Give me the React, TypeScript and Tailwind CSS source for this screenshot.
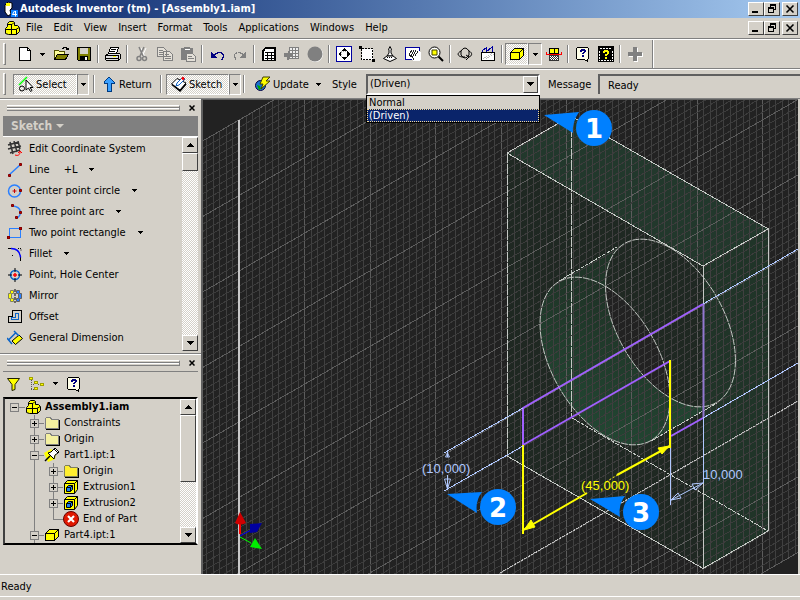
import { useState, type ReactNode } from "react";

const RAISED =
  "border border-t-white border-l-white border-b-[#404040] border-r-[#404040] bg-[#d4d0c8]";
const PRESSED = "border border-t-[#808080] border-l-[#808080] border-b-white border-r-white";
const CHECKER =
  "bg-[repeating-conic-gradient(#fff_0_25%,#d4d0c8_0_50%)] bg-[length:2px_2px]";

function Icon({ children, smooth }: { children: ReactNode; smooth?: boolean }) {
  return (
    <svg
      className="w-4 h-4 shrink-0"
      viewBox="0 0 16 16"
      fill="none"
      stroke="#000"
      shapeRendering={smooth ? "auto" : "crispEdges"}
      aria-hidden="true"
    >
      {children}
    </svg>
  );
}

function Arrow({ up }: { up?: boolean }) {
  return (
    <svg className="w-[7px] h-1 shrink-0" viewBox="0 0 7 4" shapeRendering="crispEdges" aria-hidden="true">
      <path d={up ? "M0 4h7L3.500 0z" : "M0 0h7L3.500 4z"} fill="#000" />
    </svg>
  );
}

function SmallArrow() {
  return (
    <svg className="w-[5px] h-[3px] shrink-0" viewBox="0 0 5 3" shapeRendering="crispEdges" aria-hidden="true">
      <path d="M0 0h5v1H4v1H3v1H2V2H1V1H0z" fill="#000" />
    </svg>
  );
}

const icons: Record<string, ReactNode> = {
  new: (
    <Icon>
      <path d="M2.500 1.500h8l3 3v10h-11z" fill="#fff" />
      <path d="M10.500 1.500v3h3" />
    </Icon>
  ),
  open: (
    <Icon>
      <path d="M1.500 13.500v-9h4l1 1h5v3" fill="#ffff9a" stroke="#505000" />
      <path d="M1.500 13.500l3-5h11l-3 5z" fill="#808000" />
      <path d="M9.500 2.500l2-1h2l1 2M12.500 3.500h3v-2" />
    </Icon>
  ),
  save: (
    <Icon>
      <path d="M1.500 1.500h13v13h-12l-1-1z" fill="#808000" />
      <path d="M4 2h8v6H4z" fill="#d4d0c8" stroke="none" />
      <path d="M4 10h8v4H4z" fill="#000" stroke="none" />
      <path d="M9 11h2v3H9z" fill="#fff" stroke="none" />
    </Icon>
  ),
  print: (
    <Icon>
      <path d="M5.500 1.500h8l-2 6h-8z" fill="#fff" />
      <path d="M6 3.500h5M5 5.500h5" />
      <path d="M.5 9.500l3-2h11l1 1v4l-2 2h-12l-1-1z" fill="#e0e0e0" />
      <path d="M1 9.500h12M1 12.500h12M13.500 9v5" />
      <path d="M8 10.500h3" stroke="#ff0" />
    </Icon>
  ),
  cut: (
    <Icon smooth>
      <path d="M6 1l4 9M11 1l-4 9" stroke="#fff" transform="translate(1 1)" />
      <path d="M5 1l4 9M10 1l-4 9" stroke="#808080" strokeWidth="1.500" />
      <circle cx="5" cy="12.500" r="2" stroke="#808080" strokeWidth="1.500" />
      <circle cx="10.500" cy="12.500" r="2" stroke="#808080" strokeWidth="1.500" />
    </Icon>
  ),
  copy: (
    <Icon>
      <path d="M.5 1.500h6l3 3v6h-9zM6.500 5.500h6l3 3v6h-9z" stroke="#808080" fill="#e4e0d8" />
      <path d="M2 4.500h4M2 6.500h4M2 8.500h4M8 8.500h4M8 10.500h6M8 12.500h6" stroke="#808080" />
    </Icon>
  ),
  paste: (
    <Icon>
      <path d="M1 2h12v12H1z" fill="#808080" stroke="none" />
      <path d="M4.500 3.500h5" stroke="#fff" />
      <path d="M4 1h6v2H4z" fill="#808080" stroke="none" />
      <path d="M6.500 7.500h6l3 3v5h-9z" fill="#e4e0d8" stroke="#808080" />
      <path d="M8 10.500h4M8 12.500h6" stroke="#808080" />
    </Icon>
  ),
  undo: (
    <Icon>
      <path d="M2 6v6h6v-1H7v-1H6V9H5V8H4V7H3V6z" fill="#000080" stroke="none" />
      <path d="M5 8.500h1v-1h2v-1h4v1h1v1h1v3h-1v2h-1" stroke="#000080" />
    </Icon>
  ),
  redo: (
    <Icon>
      <path d="M14 6v6H8v-1h1v-1h1V9h1V8h1V7h1V6z" fill="#808080" stroke="none" />
      <path d="M11 8.500h-1v-1H8v-1H4v1H3v1H2v3h1v2h1" stroke="#808080" strokeDasharray="3 1" />
    </Icon>
  ),
  table: (
    <Icon>
      <path d="M1.500 4.500l3-3h10v13h-13z" fill="#fff" />
      <path d="M2.500 14V5l2-2.500h9V14" />
      <path d="M4 6.500h10M4 9.500h10M4 12.500h10M6.500 6v8M10.500 6v8" />
    </Icon>
  ),
  sheet: (
    <Icon>
      <path d="M5.500 1.500h9v11h-9z" fill="#eee" stroke="#808080" />
      <path d="M5 4.500h10M5 7.500h10M5 10.500h10M8.500 1v12M11.500 1v12" stroke="#808080" />
      <path d="M0 7h4V5l4 4-3 5H3v-3H0z" fill="#808080" stroke="none" />
    </Icon>
  ),
  disc: (
    <Icon smooth>
      <circle cx="8.500" cy="8.500" r="7.500" fill="#fff" stroke="none" />
      <circle cx="8" cy="8" r="7.500" fill="#808080" stroke="none" />
    </Icon>
  ),
  zoomAll: (
    <Icon>
      <path d="M.5.5h15v15H.5z" fill="#fff" stroke="#0000a0" />
      <path d="M5 5h6v6H5z" stroke="#aaa" strokeDasharray="1 1" />
      <path d="M8 2l3 3H5zM8 14l3-3H5zM2 8l3-3v6zM14 8l-3-3v6z" fill="#000" stroke="none" />
    </Icon>
  ),
  zoomWindow: (
    <Icon>
      <path d="M2.500 2.500h11v11h-11z" fill="#fff" strokeDasharray="2 1" />
      <path d="M0 0h3v3H0zM13 13h3v3h-3z" fill="#000" stroke="none" />
    </Icon>
  ),
  zoom: (
    <Icon smooth>
      <path d="M8 .5l1.500 3H9V7l2 3H5l2-3V3.500h-.5z" fill="#fff" />
      <path d="M5 10l-3.500 2.500L8 15.500l6.500-3L11 10z" fill="#fff" />
      <path d="M5 11.500h6" strokeDasharray="1 1" />
    </Icon>
  ),
  pan: (
    <Icon>
      <path d="M.5 1.500h14v12H.5z" fill="#fff" stroke="#0000a0" />
      <path d="M7 8l2-4h5l2 3v6l-2 2H8l-3-4z" fill="#fff" stroke="none" />
      <path
        d="M4 8.500l2-3 1-1M6 9.500l3-5M8 9.500l3-5M10 9.500l3-4M4 9.500l3 1 2 3"
        stroke="#222"
      />
    </Icon>
  ),
  zoomSelect: (
    <Icon smooth>
      <circle cx="6.500" cy="6.500" r="5.500" fill="#fff" />
      <path d="M10.500 10.500l4.500 4.500" strokeWidth="2" />
      <path d="M4 4h5v5H4z" fill="#ff0" stroke="#404000" />
    </Icon>
  ),
  rotate: (
    <Icon smooth>
      <path d="M4 9V5q4-6 8 0v4q-4 6-8 0" />
      <path d="M4 5C0 7 0 10 5 11h3M12 5c4 2 3 5 0 6M9 9l3 2-3 3" />
    </Icon>
  ),
  lookAt: (
    <Icon>
      <path d="M1.500 6.500h13v8h-13z" fill="#fff" />
      <path d="M2.500 6V4.500l4-3V6M6 6l6-5v5" stroke="#0000a0" />
      <path d="M3 13l9-6M6 13l8-5" stroke="#bbb" strokeDasharray="1 1" />
    </Icon>
  ),
  box: (
    <Icon>
      <path d="M1.500 6.500l4-4h9v7l-4 4h-9z" fill="#ff0" />
      <path d="M1.500 6.500h9v7M10.500 6.500l4-4" />
    </Icon>
  ),
  section: (
    <Icon>
      <path d="M3.500 2.500h9v5h-9z" fill="#ff0" />
      <path d="M8.500 2v6" />
      <path d="M3 9h10v6H3z" fill="#333" stroke="none" />
      <path d="M0 8.500h16M.5 6v3M15.500 6v3" stroke="#f00" />
      <path d="M4 10.500h8M5 11.500h8M4 12.500h8M5 13.500h8" stroke="#fff" strokeDasharray="1 1" />
    </Icon>
  ),
  help: (
    <Icon>
      <path d="M1.500 2.500l1-1h10l1 1v10l-1 1v2l-3-2h-7l-1-1z" fill="#ffffe8" />
      <path d="M5 6V4h1V3h4v1h1v2h-1v1H9v1H7V7h1V6h1V5H7v1zM7 9h2v2H7z" fill="#000080" stroke="none" />
    </Icon>
  ),
  helpGrid: (
    <Icon>
      <path d="M0 0h16v16H0z" fill="#000" stroke="none" />
      <path d="M2 2.500h12M1.500 5v10M14.500 5v10M3 14.500h10" stroke="#fff" strokeDasharray="2 1" />
      <path d="M5 7V5h1V4h4v1h1v3h-1v1H9v1H7V8h2V6H7v1zM7 11h2v2H7z" fill="#ff0" stroke="none" />
    </Icon>
  ),
  plus: (
    <Icon>
      <path d="M7 2h4v5h5v4h-5v5H7v-5H2V7h5z" fill="#fff" stroke="none" />
      <path d="M6 1h4v5h5v4h-5v5H6v-5H1V6h5z" fill="#808080" stroke="none" />
    </Icon>
  ),
  cursor: (
    <Icon smooth>
      <path d="M1 9L9 1" stroke="#0f0" strokeWidth="1.500" />
      <circle cx="4" cy="12.500" r="2.500" />
      <path d="M8 4v10l2.500-2 2 3.500 1.500-1-2-3h3z" fill="#fff" />
    </Icon>
  ),
  up: (
    <Icon>
      <path d="M8 1l5 5v1h-3v8H6V7H3V6z" fill="#3aa0ff" stroke="#003a80" />
    </Icon>
  ),
  sketch: (
    <Icon smooth>
      <path d="M.5 8L6 2.500 15 7l-6 7z" fill="#fff" />
      <path d="M1 8.500l8 6.500 6-7" strokeWidth="1.500" />
      <path d="M5 10l1-3 6-6 2 2-6 6z" fill="#fff" stroke="#1060c0" />
      <path d="M11 1.500l2 2" stroke="#f00" strokeWidth="2.500" />
    </Icon>
  ),
  update: (
    <Icon smooth>
      <circle cx="5.500" cy="9.500" r="5" fill="#1a70d0" stroke="#004" />
      <path d="M2 9l3 1 1 3-2 1z" fill="#0a0" stroke="none" />
      <path d="M8 1h7l-4 4h4l-9 8 2-5H5z" fill="#ff0" stroke="#404000" />
    </Icon>
  ),
  coord: (
    <Icon smooth>
      <path d="M1 4l11-3M1 8l13-3M3 12l10-3M3 1l3 12M7 0l3 11M11 0l2 8" stroke="#333" strokeWidth="1.500" />
      <path d="M8 14c3 1 5 0 5-3M11 12l2-2 2 2" stroke="#f00" />
    </Icon>
  ),
  line: (
    <Icon smooth>
      <path d="M2 13L13 3" stroke="#2a7fff" strokeWidth="1.500" />
      <path d="M1.500 12.500h2v2h-2zM12.500 1.500h2v2h-2z" fill="#c00000" stroke="#800000" />
    </Icon>
  ),
  circle: (
    <Icon smooth>
      <circle cx="7.500" cy="8" r="6" stroke="#2a7fff" strokeWidth="1.500" />
      <path d="M5.500 8h4M7.500 6v4" stroke="#c00" />
      <path d="M12.500 6.500h2v2h-2z" fill="#c00000" stroke="#800000" />
    </Icon>
  ),
  arc: (
    <Icon smooth>
      <path d="M6 2c9 1 9 9 4 12" stroke="#2a7fff" strokeWidth="1.500" />
      <path d="M4.500.5h2v2h-2zM12.500 7.500h2v2h-2zM8.500 12.500h2v2h-2z" fill="#c00000" stroke="#800000" />
    </Icon>
  ),
  rect: (
    <Icon>
      <path d="M2 3.500h11v9H2z" stroke="#2a7fff" />
      <path d="M.5 11.500h2v2h-2zM12.500 2.500h2v2h-2z" fill="#c00000" stroke="#800000" />
    </Icon>
  ),
  fillet: (
    <Icon smooth>
      <path d="M1 2.500h3M13.500 11v4" />
      <path d="M4 2.500c6 0 9 3 9.500 9" stroke="#00f" strokeWidth="1.500" />
      <path d="M11 2.500h3v3" strokeDasharray="1 1" />
      <path d="M5 9.500h1" />
    </Icon>
  ),
  point: (
    <Icon smooth>
      <circle cx="8" cy="8" r="4.500" stroke="#0a64c8" strokeWidth="1.500" />
      <path d="M8 1v4M8 11v4M1 8h4M11 8h4" />
      <path d="M6 8h4M8 6v4" stroke="#f00" strokeWidth="1.500" />
    </Icon>
  ),
  mirror: (
    <Icon smooth>
      <path d="M6.500 2.500h-3v3h-2v5h2v3h3v-3h-2v-5h2z" fill="#ff0" stroke="#808060" />
      <path d="M9.500 2.500h3v3h2v5h-2v3h-3v-3h2v-5h-2z" fill="#2a7fff" stroke="#606060" />
      <path d="M8 1v14" strokeDasharray="3 1" />
    </Icon>
  ),
  offset: (
    <Icon>
      <path d="M5.500 1.500h9v12h-13v-6h4z" />
      <path d="M8.500 4.500h3v6h-7v-2h4z" stroke="#0a64c8" />
    </Icon>
  ),
  dimension: (
    <Icon smooth>
      <path d="M5 11l7-6 3.500 3.500-7 6z" fill="#ff0" />
      <path d="M0 8l5 6M7 1l5 5M2 9.500L8.500 3" stroke="#0a64c8" strokeWidth="1.500" />
    </Icon>
  ),
  filter: (
    <Icon smooth>
      <path d="M1.500 2.500h12l-4.500 6v5l-3 1V8.500z" fill="#ff0" stroke="#202000" />
    </Icon>
  ),
  treeView: (
    <Icon>
      <path d="M2.500 4v10M2 8.500h4M2 13.500h4M9 8.500h3" stroke="#555" strokeDasharray="1 1" />
      <path d="M.5 1.500h3v2h-3zM5.500 5.500h3v2h-3zM11.500 7.500h3v2h-3zM5.500 11.500h3v2h-3z" fill="#ff0" stroke="#a0a000" />
    </Icon>
  ),
  assembly: (
    <Icon smooth>
      <path d="M3.500 6.500v-3l2-2h4l1 1v3h3l2 2v4l-3 3h-8l-3-1v-5z" fill="#ff0" />
      <path d="M2 9.500h10.500v5M7.500 5v9M12 9.500l3-2M4 4.500h4l2-2" />
    </Icon>
  ),
  folder: (
    <Icon>
      <path d="M1.500 13.500v-10l1-1h4l1 2h7v9z" fill="#f4f0a0" stroke="#808080" />
      <path d="M2 14.500h13.500V5" />
    </Icon>
  ),
  folderYellow: (
    <Icon>
      <path d="M1.500 13.500v-10l1-1h4l1 2h7v9z" fill="#ffee30" stroke="#808060" />
      <path d="M2 14.500h13.500V5" />
    </Icon>
  ),
  pin: (
    <Icon smooth>
      <path d="M0 6l7-4 5 4-1 6-7 3z" fill="#ff0" stroke="none" />
      <path d="M1 14l5-5" strokeWidth="1.500" />
      <path d="M4 6l3-1 3-3 1-1 4 4-1 1-3 2-1 4z" fill="#fff" />
      <path d="M10 2l4 4" />
    </Icon>
  ),
  extrusion: (
    <Icon smooth>
      <path d="M1.500 4.500l3-3h10v9l-3 4h-10z" fill="#ff0" />
      <path d="M1.500 4.500h10v10M11.500 4.500l3-3" />
      <path d="M3.500 8.500l2-2h4v4l-2 2h-4z" fill="#1a80f0" />
      <path d="M3.500 8.500h4v4M7.500 8.500l2-2" />
    </Icon>
  ),
  end: (
    <Icon smooth>
      <circle cx="8" cy="8" r="7.500" fill="#e01800" stroke="#600" />
      <path d="M5 5l6 6M11 5l-6 6" stroke="#fff" strokeWidth="2.200" />
    </Icon>
  ),
  app: (
    <Icon smooth>
      <path d="M3 4l3-3 4 1v5l-2 2 1 4-3 2-3-4z" fill="#fff" />
      <path d="M4 2h4v3H4z" fill="#ff0" stroke="none" />
      <path d="M9 9h7v7H9z" fill="#0a80ff" stroke="none" />
      <path d="M12.500 10l-2 3.500H15M13.500 10v5.500" stroke="#fff" />
    </Icon>
  ),
};

function WindowButtons() {
  return (
    <div className="flex">
      <button aria-label="Minimize" className={`w-4 h-[14px] flex items-center justify-center ${RAISED}`}>
        <svg className="w-2.5 h-2.5" viewBox="0 0 10 10" aria-hidden="true">
          <path d="M1 7h6v2H1z" />
        </svg>
      </button>
      <button aria-label="Restore" className={`w-4 h-[14px] flex items-center justify-center ${RAISED}`}>
        <svg className="w-2.5 h-2.5" viewBox="0 0 10 10" fill="none" stroke="#000" shapeRendering="crispEdges" aria-hidden="true">
          <path d="M3.500 3V.5h5v5H7M3 1.500h6M1.500 3.500h5v5h-5zM1 4.500h6" />
        </svg>
      </button>
      <button aria-label="Close" className={`ml-0.5 w-4 h-[14px] flex items-center justify-center ${RAISED}`}>
        <svg className="w-2.5 h-2.5" viewBox="0 0 10 10" stroke="#000" strokeWidth="1.600" aria-hidden="true">
          <path d="M1.500 1.500l7 7M8.500 1.500l-7 7" />
        </svg>
      </button>
    </div>
  );
}

function Separator() {
  return (
    <div className="w-1.5 h-[18px] flex justify-center shrink-0">
      <div className="w-0.5 border-l border-[#808080] border-r border-r-white" />
    </div>
  );
}

function Grip() {
  return <div className="w-[3px] h-[22px] shrink-0 border border-t-white border-l-white border-b-[#808080] border-r-[#808080]" />;
}

function ToolButton({ name }: { name: string }) {
  return (
    <button aria-label={name} className="w-[23px] h-[22px] shrink-0 flex items-center justify-center">
      {icons[name]}
    </button>
  );
}

function StandardToolbar() {
  return (
    <div className="h-[30px] flex items-center border-t border-t-white border-b border-b-[#808080] pl-[3px]">
      <Grip />
      <div className="w-[7px] shrink-0" />
      <ToolButton name="new" />
      <button aria-label="New options" className="w-[13px] h-[22px] flex items-center justify-center">
        <SmallArrow />
      </button>
      <ToolButton name="open" />
      <ToolButton name="save" />
      <Separator />
      <ToolButton name="print" />
      <Separator />
      <ToolButton name="cut" />
      <ToolButton name="copy" />
      <ToolButton name="paste" />
      <Separator />
      <ToolButton name="undo" />
      <ToolButton name="redo" />
      <Separator />
      <ToolButton name="table" />
      <ToolButton name="sheet" />
      <ToolButton name="disc" />
      <Separator />
      <ToolButton name="zoomAll" />
      <ToolButton name="zoomWindow" />
      <ToolButton name="zoom" />
      <ToolButton name="pan" />
      <ToolButton name="zoomSelect" />
      <Separator />
      <ToolButton name="rotate" />
      <ToolButton name="lookAt" />
      <Separator />
      <button aria-label="Shaded display" className={`w-[23px] h-[22px] flex items-center justify-center ${PRESSED} ${CHECKER}`}>
        {icons.box}
      </button>
      <button aria-label="Display options" className={`w-[14px] h-[22px] flex items-center justify-center ${PRESSED}`}>
        <SmallArrow />
      </button>
      <ToolButton name="section" />
      <Separator />
      <ToolButton name="help" />
      <ToolButton name="helpGrid" />
      <Separator />
      <ToolButton name="plus" />
      <div className="ml-1.5 self-stretch w-0.5 border-l border-[#808080] border-r border-r-white" />
    </div>
  );
}

function CommandBar() {
  const [style, setStyle] = useState("(Driven)");
  return (
    <div className="h-[29px] flex items-center border-t border-t-white pl-[3px]">
      <Grip />
      <div className={`ml-[7px] w-16 h-[21px] flex items-center shrink-0 ${PRESSED} ${CHECKER}`}>
        <button className="flex items-center gap-0.5 pl-1">
          {icons.cursor}
          <span className="pt-0.5">Select</span>
        </button>
      </div>
      <button aria-label="Select options" className={`w-3 h-[21px] flex items-center justify-center ${PRESSED}`}>
        <SmallArrow />
      </button>
      <div className="w-0.5" />
      <Separator />
      <button className="flex items-center gap-0.5 w-[61px] pl-1 shrink-0">
        {icons.up}
        <span className="pt-0.5">Return</span>
      </button>
      <Separator />
      <div className={`ml-0.5 w-[63px] h-[21px] flex items-center shrink-0 ${PRESSED} ${CHECKER}`}>
        <button className="flex items-center gap-0.5 pl-1">
          {icons.sketch}
          <span className="pt-0.5">Sketch</span>
        </button>
      </div>
      <button aria-label="Sketch options" className={`w-3 h-[21px] flex items-center justify-center ${PRESSED}`}>
        <SmallArrow />
      </button>
      <Separator />
      <button className="ml-2 flex items-center gap-0.5 w-[59px] shrink-0">
        {icons.update}
        <span className="pt-0.5">Update</span>
      </button>
      <button aria-label="Update options" className="w-2 h-[21px] flex items-center justify-center">
        <SmallArrow />
      </button>
      <label htmlFor="style" className="ml-2.5 pt-0.5 w-[34px] shrink-0">
        Style
      </label>
      <div className="relative w-[174px] shrink-0">
        <select
          id="style"
          value={style}
          onChange={(e) => setStyle(e.target.value)}
          className="block appearance-none w-full h-[21px] pl-0.5 bg-[#d4d0c8] border-2 border-t-[#606060] border-l-[#606060] border-b-white border-r-white rounded-none outline-none"
        >
          <option>Normal</option>
          <option>(Driven)</option>
        </select>
        <span className={`pointer-events-none absolute right-0.5 top-0.5 w-[15px] h-[17px] flex items-center justify-center ${RAISED}`}>
          <Arrow />
        </span>
        <ul className="absolute z-10 left-0 top-full w-full border border-black bg-[#d4d0c8] leading-[13px]">
          <li className="pl-0.5 h-[13px]">Normal</li>
          <li className="pl-px h-[13px] bg-[#0a246a] text-white border border-dotted border-[#f5db95] leading-[11px]">
            (Driven)
          </li>
        </ul>
      </div>
      <label htmlFor="message" className="ml-2 pt-0.5 w-[50px] shrink-0">
        Message
      </label>
      <input
        id="message"
        readOnly
        value="Ready"
        className="flex-1 min-w-0 h-5 pl-2 bg-[#d4d0c8] border-t-2 border-l-2 border-[#606060] outline-none"
      />
    </div>
  );
}

function PanelGrip() {
  return (
    <div className="h-4 flex items-center gap-2 pl-1 pr-0.5">
      <div className="flex-1 h-1.5 border-y border-t-white border-b-[#808080] border-r border-r-[#808080] flex items-center">
        <div className="w-full h-0.5 border-t border-t-[#808080] border-b border-b-white" />
      </div>
      <button aria-label="Close panel" className="w-2 h-2 flex items-center justify-center">
        <svg className="w-1.5 h-1.5" viewBox="0 0 6 6" stroke="#000" strokeWidth="1.500" aria-hidden="true">
          <path d="M.5.5l5 5M5.500.5l-5 5" />
        </svg>
      </button>
    </div>
  );
}

function ScrollBar({ thumb }: { thumb: string }) {
  return (
    <div className={`w-4 shrink-0 flex flex-col ${CHECKER}`}>
      <button aria-label="Scroll up" className={`h-4 flex items-center justify-center ${RAISED}`}>
        <Arrow up />
      </button>
      <div className={`${thumb} ${RAISED}`} />
      <div className="flex-1" />
      <button aria-label="Scroll down" className={`h-4 flex items-center justify-center ${RAISED}`}>
        <Arrow />
      </button>
    </div>
  );
}

const tools = [
  { icon: "coord", label: "Edit Coordinate System" },
  { icon: "line", label: "Line", key: "+L", menu: true },
  { icon: "circle", label: "Center point circle", menu: true },
  { icon: "arc", label: "Three point arc", menu: true },
  { icon: "rect", label: "Two point rectangle", menu: true },
  { icon: "fillet", label: "Fillet", menu: true },
  { icon: "point", label: "Point, Hole Center" },
  { icon: "mirror", label: "Mirror" },
  { icon: "offset", label: "Offset" },
  { icon: "dimension", label: "General Dimension" },
];

function SketchPanel() {
  return (
    <section className="h-[255px] border-t border-t-white border-b border-b-[#808080] px-[3px]">
      <PanelGrip />
      <button className="w-full h-5 bg-[#808080] text-[#d4d0c8] text-[12px] font-bold flex items-center gap-1 pl-2">
        Sketch
        <svg className="w-2 h-1" viewBox="0 0 8 4" fill="#d4d0c8" aria-hidden="true">
          <path d="M0 0h8L4 4z" />
        </svg>
      </button>
      <div className="flex h-[215px] border-t border-t-white">
        <ul className="flex-1 pt-px">
          {tools.map((t) => (
            <li key={t.label} className="h-[21px] flex items-center">
              <button className="flex items-center gap-1.5 pl-1 whitespace-nowrap">
                {icons[t.icon]}
                {t.label}
                {t.key && <span className="ml-2">{t.key}</span>}
                {t.menu && (
                  <span className="ml-1.5">
                    <SmallArrow />
                  </span>
                )}
              </button>
            </li>
          ))}
        </ul>
        <ScrollBar thumb="h-[18px]" />
      </div>
    </section>
  );
}

const tree = [
  { depth: 0, icon: "assembly", label: "Assembly1.iam", sign: "-" },
  { depth: 1, icon: "folder", label: "Constraints", sign: "+" },
  { depth: 1, icon: "folder", label: "Origin", sign: "+" },
  { depth: 1, icon: "pin", label: "Part1.ipt:1", sign: "-" },
  { depth: 2, icon: "folderYellow", label: "Origin", sign: "+" },
  { depth: 2, icon: "extrusion", label: "Extrusion1", sign: "+" },
  { depth: 2, icon: "extrusion", label: "Extrusion2", sign: "+" },
  { depth: 2, icon: "end", label: "End of Part", sign: "" },
  { depth: 1, icon: "box", label: "Part4.ipt:1", sign: "-" },
];

// one 19px wide tree cell: connector lines plus the expand box
function Branch({ sign, last }: { sign: string; last?: boolean }) {
  return (
    <svg className="w-[19px] h-4 shrink-0" viewBox="0 0 19 16" fill="none" stroke="#808080" shapeRendering="crispEdges" aria-hidden="true">
      <path d={last ? "M9.500 0v8.500H19" : "M9.500 0v16M9 8.500h10"} />
      {sign && <path d="M5.500 4.500h8v8h-8z" fill="#d4d0c8" />}
      {sign && <path d={sign === "+" ? "M7 8.500h5M9.500 6v5" : "M7 8.500h5"} stroke="#000" />}
    </svg>
  );
}

function BrowserPanel() {
  return (
    <section className="flex-1 border-t border-t-white px-[3px] min-h-0">
      <PanelGrip />
      <div className="h-6 mb-0.5 border-t border-[#808080] flex items-center pl-[3px]">
        <button aria-label="Filter">{icons.filter}</button>
        <button aria-label="View" className="ml-[7px]">
          {icons.treeView}
        </button>
        <button aria-label="View options" className="ml-2 h-4 flex items-center">
          <SmallArrow />
        </button>
        <button aria-label="Help" className="ml-2">
          {icons.help}
        </button>
      </div>
      <div className="h-[148px] flex border-2 border-t-black border-l-[#404040] border-b-black border-r-white bg-[#d4d0c8]">
        <ul className="flex-1 overflow-hidden">
          {tree.map((n, i) => (
            <li key={i} className="h-4 flex items-center whitespace-nowrap">
              {n.depth === 0 ? (
                <svg className="w-5 h-4 shrink-0" viewBox="0 0 20 16" fill="none" stroke="#808080" shapeRendering="crispEdges" aria-hidden="true">
                  <path d="M5.500 4.500h8v8h-8zM14 8.500h6" />
                  <path d="M7 8.500h5" stroke="#000" />
                </svg>
              ) : (
                <>
                  <span className="w-5 shrink-0" />
                  {n.depth === 2 && (
                    <span className="w-[19px] h-4 shrink-0 flex justify-center">
                      <span className="w-px bg-[#808080]" />
                    </span>
                  )}
                  <Branch sign={n.sign} last={n.icon === "end"} />
                </>
              )}
              {icons[n.icon]}
              <span className={n.depth === 0 ? "ml-1 font-bold" : "ml-1"}>{n.label}</span>
            </li>
          ))}
        </ul>
        <ScrollBar thumb="h-[67px]" />
      </div>
    </section>
  );
}

// isometric grid: origin on the bright axis, major cell every ten minor ones
const ORIGIN_X = 239;
const ORIGIN_Y = 120;
const STEP_X = 6.54;
const STEP_Y = 7.55;
const SLOPE = 0.577;
const yAt = (x: number, k: number) => ORIGIN_Y + k * STEP_Y - SLOPE * (x - ORIGIN_X);

function Grid() {
  const verticals = Array.from({ length: 93 }, (_, i) => i - 6);
  const diagonals = Array.from({ length: 101 }, (_, i) => i);
  return (
    <g shapeRendering="crispEdges" strokeWidth="1">
      {verticals.map((i) => {
        const x = Math.round(ORIGIN_X + i * STEP_X) + 0.5;
        return (
          <line key={i} x1={x} x2={x} y1={yAt(x, 0)} y2={yAt(x, 100)} stroke={i % 10 === 0 ? "#5c5c5c" : "#404040"} />
        );
      })}
      {diagonals.map((k) => (
        <line
          key={k}
          x1={200}
          y1={yAt(200, k)}
          x2={800}
          y2={yAt(800, k)}
          stroke={k % 10 === 0 ? "#5c5c5c" : "#3c3c3c"}
        />
      ))}
    </g>
  );
}

const FRONT = "matrix(0.866 0.5 0 1 605 361)";
const BACK = "matrix(0.866 0.5 0 1 670.500 323)";

function Callout({ x, y, label, tail }: { x: number; y: number; label: string; tail: string }) {
  return (
    <g>
      <path d={tail} fill="#0080ff" />
      <circle cx={x} cy={y} r="18" fill="#0080ff" />
      <text
        x={x}
        y={y + 10}
        textAnchor="middle"
        fill="#fff"
        className="font-['DejaVu_Sans',sans-serif] font-bold text-[26px]"
      >
        {label}
      </text>
    </g>
  );
}

function Viewport() {
  return (
    <svg
      className="flex-1 min-w-0 h-full bg-[#222] border-l-2 border-t border-[#606060]"
      viewBox="203 100 595 474"
      preserveAspectRatio="xMinYMin slice"
      fill="none"
      role="img"
      aria-label="Assembly view"
    >
      <defs>
        <clipPath id="frontHole">
          <circle r="75" transform={FRONT} />
        </clipPath>
        <clipPath id="leftFace">
          <path d="M507 153L703 266V568L507 456z" />
        </clipPath>
        <linearGradient id="bore" x1="0" y1="0" x2="0" y2="1">
          <stop offset="0" stopColor="#1f3226" />
          <stop offset="1" stopColor="#224632" />
        </linearGradient>
      </defs>

      <path d="M507 153L571 116 768 229 703 266z" fill="#22382c" />
      <path d="M507 153L703 266V568L507 456z" fill="#1f2822" />
      <path d="M703 266L768 229V531L703 568z" fill="#203428" />
      <g clipPath="url(#leftFace)">
        <path d="M559 281L625 243 717 403 651 441z" fill="url(#bore)" />
        <circle r="75" transform={FRONT} fill="url(#bore)" />
        <circle r="75" transform={BACK} fill="#1f2822" />
      </g>
      <g clipPath="url(#frontHole)">
        <circle r="75" transform={BACK} fill="#222" />
      </g>

      <Grid />
      <path d="M239 120V574" stroke="#c8c8c8" strokeWidth="2" shapeRendering="crispEdges" />
      <path d="M500 573L798 401" stroke="#c0c0c0" strokeDasharray="3 1" shapeRendering="crispEdges" />

      <g stroke="#c4c8c4" shapeRendering="crispEdges">
        <path d="M571 116L768.500 229M507 153L703 266L768 229M768 531L703 568.500L507 456M507 153L571 116" />
        <path d="M768.500 229V531M703.500 266V304M703.500 483V568" />
        <path d="M507.500 153V456M571.500 116V418" strokeDasharray="10 1" />
        <path d="M572 418L768 531M559 281L617 247M651 441L717 403" strokeDasharray="4 1" />
      </g>
      <g stroke="#c4c8c4">
        <circle r="75" transform={FRONT} vectorEffect="non-scaling-stroke" strokeDasharray="7 1" />
        <circle r="75" transform={BACK} vectorEffect="non-scaling-stroke" strokeDasharray="7 1" />
      </g>

      <path d="M703.500 304V418" stroke="#9278d0" strokeWidth="2" />
      <path d="M523 445V408L703 304M523 445L670 361M671 436L703 418" stroke="#a060ff" strokeWidth="2" />
      <g stroke="#ff0" strokeWidth="2">
        <path d="M523 445V534M670 360V448M523 530L587 493M617 475L670 446" />
        <path d="M524 530l7-10 4 7zM669 446l-11 2 4 6z" fill="#ff0" strokeWidth="1" />
        <path d="M606 482l11-7" strokeWidth="1" strokeDasharray="2 2" />
      </g>
      <g stroke="#b0c8ff">
        <path
          d="M444 453L523 408M444 491L523 446M703 304L798 249M703 418L798 363"
          shapeRendering="crispEdges"
        />
        <path d="M703.500 418V483M670.500 448V505" />
        <path d="M447.500 452v5M445.500 457l2-4 2 4zM447.500 475v15M444.500 479l3 10 3-10z" />
        <path d="M671 500L703 483M671 500l7-7 3 5zM703 483l-11 1 3 6z" />
      </g>

      <g className="font-['Liberation_Sans',sans-serif] text-[13px]">
        <text x="422" y="473" fill="#b0c8ff">
          (10,000)
        </text>
        <text x="703" y="479" fill="#b0c8ff">
          10,000
        </text>
        <text x="581" y="490" fill="#ff0">
          (45,000)
        </text>
      </g>

      <Callout x={594} y={128} label="1" tail="M544 115L579 112Q572 122 573 133z" />
      <Callout x={498} y={507} label="2" tail="M447 494L482 492Q475 501 477 513z" />
      <Callout x={641} y={512} label="3" tail="M590 499L625 496Q618 505 620 517z" />

      <path d="M240 534V520" stroke="#f00" strokeWidth="2" />
      <path d="M240 512L235 523q5 3 11 0z" fill="#d00000" />
      <path d="M240 536l11-6" stroke="#00f" />
      <path d="M250 524l12-1-5 9-7 1z" fill="#0000a0" />
      <path d="M240 537l11 6" stroke="#0f0" />
      <path d="M255 538l7 11-12-2z" fill="#0e0" />
    </svg>
  );
}

const menus = ["File", "Edit", "View", "Insert", "Format", "Tools", "Applications", "Windows", "Help"];

export default function App() {
  return (
    <div className="h-screen flex flex-col bg-[#d4d0c8] text-black text-[11px] leading-4 font-['DejaVu_Sans_Condensed','DejaVu_Sans','Liberation_Sans',sans-serif] overflow-hidden">
      <header className="h-[18px] shrink-0 flex items-center justify-between px-0.5 bg-linear-to-r from-[#0a246a] to-[#a6caf0]">
        <div className="flex items-center gap-0.5 text-white font-bold">
          {icons.app}
          <h1>Autodesk Inventor (tm) - [Assembly1.iam]</h1>
        </div>
        <WindowButtons />
      </header>

      <div className="h-[21px] shrink-0 flex items-center justify-between px-0.5 border-b border-[#808080]">
        <nav className="flex items-center gap-px pl-0.5">
          {icons.assembly}
          {menus.map((m) => (
            <button key={m} className="px-[5px]">
              {m}
            </button>
          ))}
        </nav>
        <WindowButtons />
      </div>

      <div className="shrink-0">
        <StandardToolbar />
        <CommandBar />
      </div>

      <main className="flex-1 min-h-0 flex border-t border-[#808080] pr-0.5">
        <aside className="w-[201px] shrink-0 flex flex-col">
          <SketchPanel />
          <BrowserPanel />
        </aside>
        <Viewport />
      </main>

      <footer className="h-[26px] shrink-0 border-t border-white pt-1">
        <p className="px-px h-[18px] border-b border-white">Ready</p>
      </footer>
    </div>
  );
}
